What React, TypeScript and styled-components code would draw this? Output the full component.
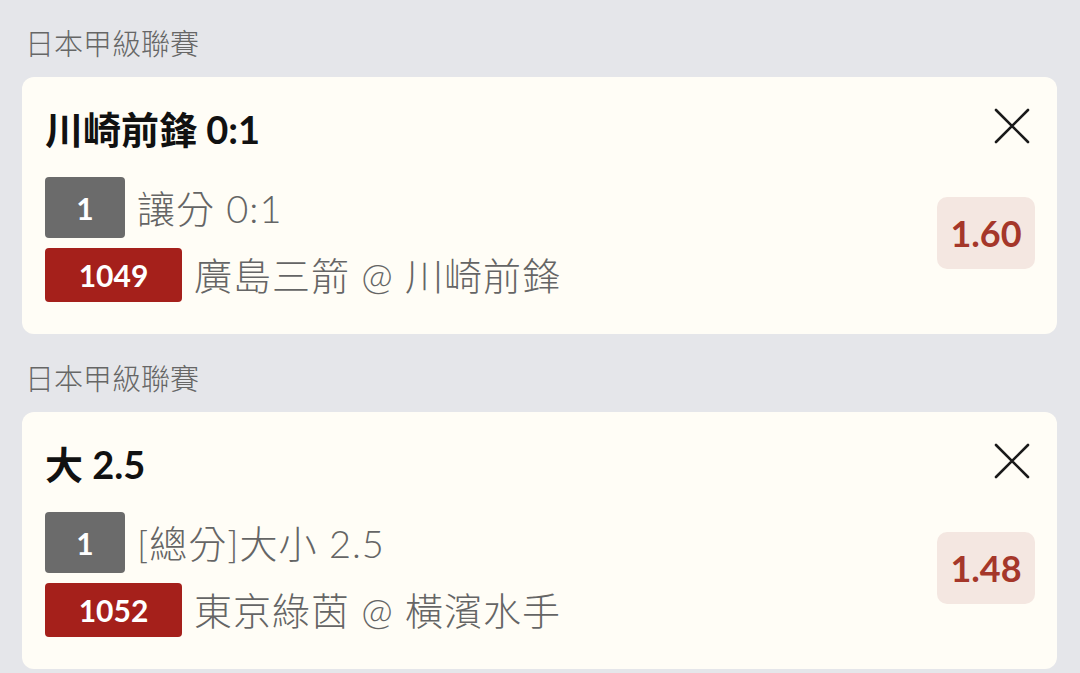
import React from "react";
import styled, { createGlobalStyle } from "styled-components";

interface Bet {
  league: string;
  title: string;
  line: string;
  matchId: string;
  match: string;
  odds: string;
}

const bets: Bet[] = [
  {
    league: "日本甲級聯賽",
    title: "川崎前鋒 0:1",
    line: "讓分 0:1",
    matchId: "1049",
    match: "廣島三箭 @ 川崎前鋒",
    odds: "1.60",
  },
  {
    league: "日本甲級聯賽",
    title: "大 2.5",
    line: "[總分]大小 2.5",
    matchId: "1052",
    match: "東京綠茵 @ 橫濱水手",
    odds: "1.48",
  },
];

const CloseIcon = () => (
  <svg width="36" height="36" viewBox="0 0 36 36" fill="none">
    <path
      d="M2 2 L34 34 M34 2 L2 34"
      stroke="#1a1a1a"
      strokeWidth="2.6"
      strokeLinecap="round"
    />
  </svg>
);

const App: React.FC = () => {
  return (
    <>
      <GlobalStyle />
      <Page>
        {bets.map((bet, index) => (
          <Section key={index}>
            <League>{bet.league}</League>
            <Card>
              <TitleRow>
                <Title>{bet.title}</Title>
                <CloseButton aria-label="close">
                  <CloseIcon />
                </CloseButton>
              </TitleRow>
              <Body>
                <Lines>
                  <Line>
                    <Badge tone="gray">1</Badge>
                    <LineText>{bet.line}</LineText>
                  </Line>
                  <Line>
                    <Badge tone="red">{bet.matchId}</Badge>
                    <LineText>{bet.match}</LineText>
                  </Line>
                </Lines>
                <Odds>{bet.odds}</Odds>
              </Body>
            </Card>
          </Section>
        ))}
      </Page>
    </>
  );
};

export default App;

const GlobalStyle = createGlobalStyle`
  html, body {
    margin: 0;
    padding: 0;
    background: #e5e6ea;
  }
  body {
    font-family: "Lato", "Noto Sans CJK TC", sans-serif;
  }
  * {
    box-sizing: border-box;
  }
`;

const Page = styled.div`
  width: 1080px;
  height: 673px;
  overflow: hidden;
  padding: 24px 23px 0 22px;
  display: flex;
  flex-direction: column;
  gap: 25px;
`;

const Section = styled.section`
  display: flex;
  flex-direction: column;
`;

const League = styled.div`
  height: 40px;
  line-height: 40px;
  padding-left: 3px;
  margin-bottom: 13px;
  font-size: 29px;
  font-weight: 300;
  color: #666;
`;

const Card = styled.div`
  background: #fffdf6;
  border-radius: 12px;
  height: 257px;
  padding: 22px 22px 32px 23px;
  display: flex;
  flex-direction: column;
`;

const TitleRow = styled.div`
  height: 60px;
  display: flex;
  align-items: center;
  justify-content: space-between;
`;

const Title = styled.div`
  font-size: 38px;
  font-weight: 700;
  color: #111;
  line-height: 60px;
`;

const CloseButton = styled.button`
  border: none;
  background: none;
  padding: 0;
  margin-right: 5px;
  margin-top: -6px;
  display: flex;
  cursor: pointer;
`;

const Body = styled.div`
  margin-top: 18px;
  display: flex;
  align-items: center;
  justify-content: space-between;
`;

const Lines = styled.div`
  display: flex;
  flex-direction: column;
  gap: 10px;
`;

const Line = styled.div`
  display: flex;
  align-items: center;
  gap: 12px;
`;

const Badge = styled.span<{ tone: "gray" | "red" }>`
  display: inline-flex;
  align-items: center;
  justify-content: center;
  border-radius: 4px;
  color: #fff;
  font-weight: 700;
  font-size: 30px;
  width: ${(props) => (props.tone === "gray" ? "80px" : "137px")};
  height: ${(props) => (props.tone === "gray" ? "61px" : "54px")};
  background: ${(props) => (props.tone === "gray" ? "#6b6b6b" : "#a5201b")};
`;

const LineText = styled.span`
  font-size: 38px;
  font-weight: 300;
  letter-spacing: 1px;
  color: #656565;
  line-height: 1;
`;

const Odds = styled.div`
  width: 98px;
  height: 72px;
  margin-top: -13px;
  border-radius: 10px;
  background: #f4e7e1;
  color: #a5372a;
  font-size: 36px;
  font-weight: 700;
  display: flex;
  align-items: center;
  justify-content: center;
`;
